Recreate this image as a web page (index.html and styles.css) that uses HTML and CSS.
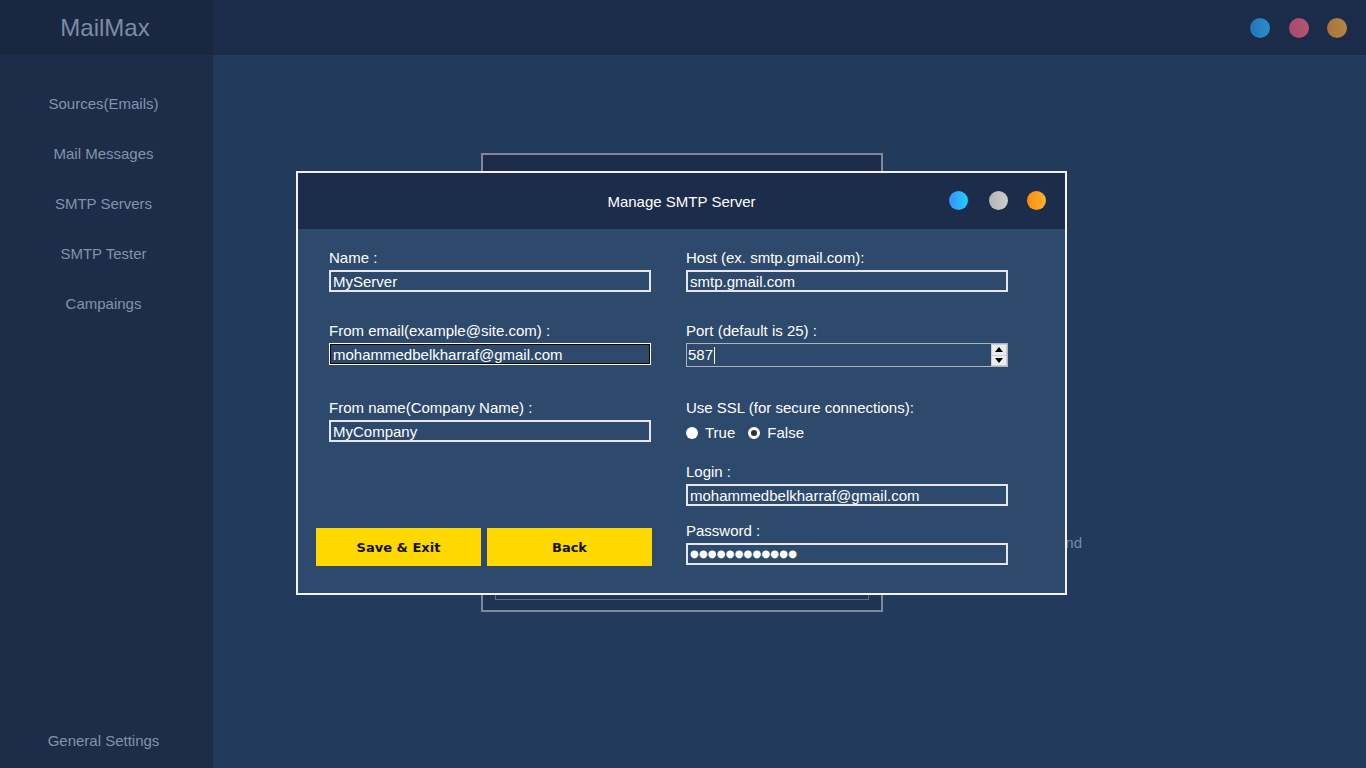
FILE: index.html
```html
<!DOCTYPE html>
<html>
<head>
<meta charset="utf-8">
<title>MailMax</title>
<link rel="stylesheet" href="styles.css">
</head>
<body>
<div class="app">
  <aside class="sidebar">
    <div class="logo">MailMax</div>
    <nav class="nav">
      <div class="nav-item">Sources(Emails)</div>
      <div class="nav-item">Mail Messages</div>
      <div class="nav-item">SMTP Servers</div>
      <div class="nav-item">SMTP Tester</div>
      <div class="nav-item">Campaings</div>
      <div class="nav-item nav-bottom">General Settings</div>
    </nav>
  </aside>
  <main class="main">
    <header class="topbar">
      <span class="tdot tdot-blue"></span>
      <span class="tdot tdot-pink"></span>
      <span class="tdot tdot-orange"></span>
    </header>
    <section class="canvas">
      <div class="bg-window">
        <div class="bg-head"></div>
        <div class="bg-inner"></div>
      </div>
      <div class="bg-text">No SMTP Servers found</div>

      <div class="modal">
        <div class="modal-head">
          <div class="modal-title">Manage SMTP Server</div>
          <div class="modal-dots">
            <span class="mdot mdot-blue"></span>
            <span class="mdot mdot-grey"></span>
            <span class="mdot mdot-orange"></span>
          </div>
        </div>
        <div class="modal-body">
          <div class="col col-left">
            <div class="field">
              <div class="label">Name :</div>
              <div class="input">MyServer</div>
            </div>
            <div class="field f-gap30">
              <div class="label">From email(example@site.com) :</div>
              <div class="input input-focus">mohammedbelkharraf@gmail.com</div>
            </div>
            <div class="field f-gap34">
              <div class="label">From name(Company Name) :</div>
              <div class="input">MyCompany</div>
            </div>
            <div class="buttons">
              <button class="btn">Save &amp; Exit</button>
              <button class="btn">Back</button>
            </div>
          </div>
          <div class="col col-right">
            <div class="field">
              <div class="label">Host (ex. smtp.gmail.com):</div>
              <div class="input">smtp.gmail.com</div>
            </div>
            <div class="field f-gap30">
              <div class="label">Port (default is 25) :</div>
              <div class="input input-num">
                <span class="num-val">587<span class="caret"></span></span>
                <span class="spin">
                  <span class="spin-btn"><svg width="8" height="5" viewBox="0 0 8 5"><path d="M4 0 L8 5 L0 5 Z" fill="#000"/></svg></span>
                  <span class="spin-btn"><svg width="8" height="5" viewBox="0 0 8 5"><path d="M0 0 L8 0 L4 5 Z" fill="#000"/></svg></span>
                </span>
              </div>
            </div>
            <div class="field f-gap33">
              <div class="label">Use SSL (for secure connections):</div>
              <div class="radios">
                <span class="radio"><span class="rb rb-on"></span>True</span>
                <span class="radio"><span class="rb rb-ring"></span>False</span>
              </div>
            </div>
            <div class="field f-gap23">
              <div class="label">Login :</div>
              <div class="input">mohammedbelkharraf@gmail.com</div>
            </div>
            <div class="field f-gap16">
              <div class="label">Password :</div>
              <div class="input input-pass">●●●●●●●●●●●●</div>
            </div>
          </div>
        </div>
      </div>
    </section>
  </main>
</div>
</body>
</html>
```
FILE: styles.css
```css
* { box-sizing: border-box; }
html, body { margin: 0; padding: 0; }
body {
  width: 1366px;
  height: 768px;
  overflow: hidden;
  font-family: "Liberation Sans", Arial, sans-serif;
  background: #223a5b;
}
.app {
  display: grid;
  grid-template-columns: 213px 1fr;
  height: 768px;
}
.sidebar {
  display: flex;
  flex-direction: column;
  background: #1c2c49;
}
.logo {
  height: 55px;
  background: #1a2740;
  color: #7c8ca5;
  font-size: 24px;
  display: flex;
  align-items: center;
  justify-content: center;
  padding-right: 3px;
}
.nav {
  flex: 1;
  display: flex;
  flex-direction: column;
  padding: 24px 6px 2px 0;
}
.nav-item {
  height: 50px;
  line-height: 50px;
  text-align: center;
  color: #8393aa;
  font-size: 15px;
}
.nav-bottom { margin-top: auto; }

.main {
  display: flex;
  flex-direction: column;
}
.topbar {
  height: 55px;
  background: #1b2c4b;
  display: flex;
  align-items: center;
  justify-content: flex-end;
  gap: 18px;
  padding-right: 19px;
}
.tdot {
  width: 20px;
  height: 20px;
  border-radius: 50%;
}
.tdot-blue { background: linear-gradient(90deg, #2475b8, #2a8fc8); margin-right: 1px; }
.tdot-pink { background: linear-gradient(90deg, #a74a6e, #b5566e); }
.tdot-orange { background: linear-gradient(90deg, #a8733a, #b88440); }

.canvas {
  flex: 1;
  position: relative;
  background: #223a5b;
}
.bg-window {
  position: absolute;
  left: 268px;
  top: 98px;
  width: 402px;
  height: 459px;
  border: 2px solid #7f8799;
  background: #1f3353;
}
.bg-head {
  height: 40px;
  background: #1b2b49;
}
.bg-inner {
  position: absolute;
  left: 12px;
  right: 12px;
  bottom: 10px;
  height: 60px;
  border: 1px solid #5f6d85;
  border-top: none;
}
.bg-text {
  position: absolute;
  right: 284px;
  top: 479px;
  color: #7b8aa3;
  font-size: 15px;
}

.modal {
  position: absolute;
  left: 83px;
  top: 116px;
  width: 771px;
  height: 424px;
  border: 2px solid #f2f2f2;
  background: #2d4a6d;
  display: flex;
  flex-direction: column;
}
.modal-head {
  height: 56px;
  background: #1c2d4b;
  position: relative;
  display: flex;
  align-items: center;
  justify-content: center;
}
.modal-title {
  color: #ffffff;
  font-size: 15px;
}
.modal-dots {
  position: absolute;
  right: 19px;
  top: 18px;
  display: flex;
}
.mdot {
  width: 19px;
  height: 19px;
  border-radius: 50%;
}
.mdot-grey { margin-left: 21px; }
.mdot-orange { margin-left: 19px; }
.mdot-blue { background: linear-gradient(90deg, #3a8cff, #1fd2ff); }
.mdot-grey { background: linear-gradient(90deg, #b4b4b4, #cdcdcd); }
.mdot-orange { background: linear-gradient(90deg, #ff8c10, #ffb22e); }

.modal-body {
  flex: 1;
  display: flex;
  gap: 35px;
  padding: 20px 0 0 31px;
}
.col {
  width: 322px;
  display: flex;
  flex-direction: column;
}
.field { display: flex; flex-direction: column; }
.f-gap30 { margin-top: 30px; }
.f-gap34 { margin-top: 34px; }
.f-gap33 { margin-top: 32px; }
.f-gap23 { margin-top: 22px; }
.f-gap16 { margin-top: 16px; }
.label {
  color: #ffffff;
  font-size: 15px;
  line-height: 17px;
  height: 17px;
  margin-bottom: 4px;
}
.input {
  height: 22px;
  border: 2px solid #e4e6ea;
  color: #ffffff;
  font-size: 15px;
  line-height: 18px;
  padding: 1px 0 0 2px;
  white-space: nowrap;
  overflow: hidden;
}
.input-focus {
  border: 1px solid #ffffff;
  box-shadow: inset 0 0 0 1px #000000;
  line-height: 20px;
  padding: 1px 0 0 3px;
}
.input-num {
  height: 24px;
  border: 1px solid #aeb4bf;
  display: flex;
  align-items: center;
  justify-content: space-between;
  padding: 0 0 0 1px;
  line-height: 20px;
}
.num-val { display: inline-flex; align-items: center; }
.caret {
  display: inline-block;
  width: 1px;
  height: 17px;
  background: #ffffff;
  margin-left: 1px;
}
.spin {
  width: 16px;
  height: 22px;
  display: flex;
  flex-direction: column;
  gap: 1px;
  background: #c9ccd2;
  padding: 1px;
}
.spin-btn {
  flex: 1;
  background: #ececec;
  display: flex;
  align-items: center;
  justify-content: center;
}
.input-pass {
  font-family: "DejaVu Sans", sans-serif;
  font-size: 10px;
  letter-spacing: 0.2px;
  line-height: 18px;
  padding: 0 0 0 2px;
}
.radios {
  display: flex;
  gap: 13px;
  margin-top: 4px;
  height: 17px;
  align-items: center;
}
.radio {
  display: inline-flex;
  align-items: center;
  gap: 7px;
  color: #ffffff;
  font-size: 15px;
}
.rb {
  width: 12px;
  height: 12px;
  border-radius: 50%;
  background: #ffffff;
}
.rb-ring {
  border: 3px solid #ffffff;
  background: #2b3037;
}
.buttons {
  display: flex;
  gap: 6px;
  margin-top: 86px;
  margin-left: -13px;
}
.btn {
  flex: 0 0 165px;
  width: 165px;
  height: 38px;
  border: none;
  background: #ffd800;
  color: #111111;
  font-family: "DejaVu Sans", Verdana, sans-serif;
  font-weight: bold;
  font-size: 13px;
  padding: 0;
  cursor: pointer;
}
```
